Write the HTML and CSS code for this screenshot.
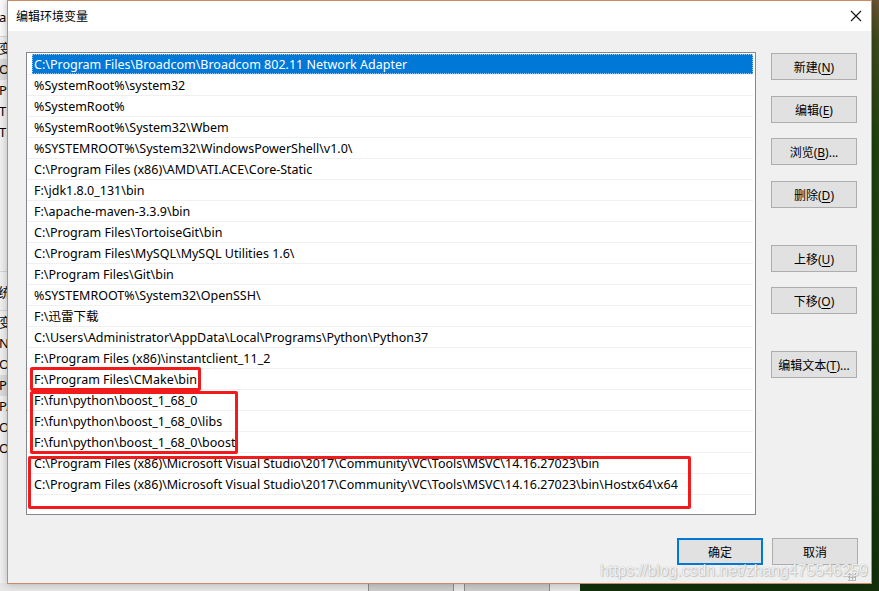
FILE: index.html
```html
<!DOCTYPE html>
<html lang="zh-CN">
<head>
    <meta charset="UTF-8">
    <title>编辑环境变量</title>
    <link rel="stylesheet" href="styles.css">
</head>
<body>
    <div class="desktop">
        <!-- window partly hidden behind the dialog -->
        <div class="behind">
            <div class="behind-top">ar</div>
            <div class="behind-list">
                <div class="frag">变</div>
                <div class="frag dark">O</div>
                <div class="frag">Pa</div>
                <div class="frag">TE</div>
                <div class="frag">TM</div>
            </div>
            <div class="behind-title">统</div>
            <div class="behind-list">
                <div class="frag">变</div>
                <div class="frag">N</div>
                <div class="frag">O</div>
                <div class="frag dark">Pa</div>
                <div class="frag">PA</div>
                <div class="frag">OP</div>
                <div class="frag">OP</div>
            </div>
            <div class="behind-footer">
                <span class="behind-btn"></span>
                <span class="behind-btn"></span>
            </div>
        </div>

        <div class="dialog">
            <div class="titlebar">
                <span class="title">编辑环境变量</span>
                <svg class="close" width="12" height="12" viewBox="0 0 12 12">
                    <path d="M1 1 L11 11 M11 1 L1 11" stroke="#111" stroke-width="1.1" fill="none"/>
                </svg>
            </div>

            <div class="dialog-body">
                <div class="main">
                    <div class="path-list">
                        <div class="row selected"><span class="cell">C:\Program Files\Broadcom\Broadcom 802.11 Network Adapter</span></div>
                        <div class="row"><span class="cell">%SystemRoot%\system32</span></div>
                        <div class="row"><span class="cell">%SystemRoot%</span></div>
                        <div class="row"><span class="cell">%SystemRoot%\System32\Wbem</span></div>
                        <div class="row"><span class="cell">%SYSTEMROOT%\System32\WindowsPowerShell\v1.0\</span></div>
                        <div class="row"><span class="cell">C:\Program Files (x86)\AMD\ATI.ACE\Core-Static</span></div>
                        <div class="row"><span class="cell">F:\jdk1.8.0_131\bin</span></div>
                        <div class="row"><span class="cell">F:\apache-maven-3.3.9\bin</span></div>
                        <div class="row"><span class="cell">C:\Program Files\TortoiseGit\bin</span></div>
                        <div class="row"><span class="cell">C:\Program Files\MySQL\MySQL Utilities 1.6\</span></div>
                        <div class="row"><span class="cell">F:\Program Files\Git\bin</span></div>
                        <div class="row"><span class="cell">%SYSTEMROOT%\System32\OpenSSH\</span></div>
                        <div class="row"><span class="cell">F:\迅雷下载</span></div>
                        <div class="row"><span class="cell">C:\Users\Administrator\AppData\Local\Programs\Python\Python37</span></div>
                        <div class="row"><span class="cell">F:\Program Files (x86)\instantclient_11_2</span></div>
                        <div class="row"><span class="cell">F:\Program Files\CMake\bin</span></div>
                        <div class="row"><span class="cell">F:\fun\python\boost_1_68_0</span></div>
                        <div class="row"><span class="cell">F:\fun\python\boost_1_68_0\libs</span></div>
                        <div class="row"><span class="cell">F:\fun\python\boost_1_68_0\boost</span></div>
                        <div class="row"><span class="cell">C:\Program Files (x86)\Microsoft Visual Studio\2017\Community\VC\Tools\MSVC\14.16.27023\bin</span></div>
                        <div class="row"><span class="cell">C:\Program Files (x86)\Microsoft Visual Studio\2017\Community\VC\Tools\MSVC\14.16.27023\bin\Hostx64\x64</span></div>
                        <div class="row empty"><span class="cell"></span></div>

                        <!-- red annotation boxes drawn over the list -->
                        <div class="mark mark-cmake"></div>
                        <div class="mark mark-boost"></div>
                        <div class="mark mark-msvc"></div>
                    </div>

                    <div class="side-buttons">
                        <button class="btn">新建(<u>N</u>)</button>
                        <button class="btn">编辑(<u>E</u>)</button>
                        <button class="btn">浏览(<u>B</u>)...</button>
                        <button class="btn">删除(<u>D</u>)</button>
                        <button class="btn gap-big">上移(<u>U</u>)</button>
                        <button class="btn">下移(<u>O</u>)</button>
                        <button class="btn gap-big">编辑文本(<u>T</u>)...</button>
                    </div>
                </div>

                <div class="footer-buttons">
                    <button class="btn default">确定</button>
                    <button class="btn">取消</button>
                </div>
            </div>

            <div class="grip"></div>
            <div class="watermark">https://blog.csdn.net/zhang475546259</div>
        </div>
    </div>
</body>
</html>
```

FILE: styles.css
```css
* {
    margin: 0;
    padding: 0;
    box-sizing: border-box;
}

body {
    width: 879px;
    height: 591px;
    overflow: hidden;
    font-family: 'Noto Sans', 'Noto Sans CJK SC', sans-serif;
    font-size: 12px;
    color: #000;
}

.desktop {
    position: relative;
    width: 879px;
    height: 591px;
    background: linear-gradient(180deg, #6a5434 0, #3d4a1c 40px, #21420f 140px, #1c3c10 400px, #12300a 591px);
}

/* window behind */
.behind {
    position: absolute;
    left: 0;
    top: 0;
    width: 580px;
    height: 591px;
    background-color: #f0f0f0;
    overflow: hidden;
}

.behind-top {
    height: 37px;
    padding-top: 8px;
    background-color: #fafafa;
    border-bottom: 1px solid #d5d5d5;
    font-size: 13px;
    margin-left: -1px;
}

.behind-list {
    padding-top: 1px;
}

.frag {
    height: 21px;
    line-height: 21px;
    font-size: 13px;
    margin-left: -1px;
}

.frag.dark {
    background-color: #dcdcdc;
}

.behind-title {
    margin-top: 128px;
    height: 40px;
    line-height: 40px;
    font-size: 13px;
    border-top: 1px solid #d5d5d5;
    border-bottom: 1px solid #d5d5d5;
    margin-left: -2px;
}

.behind-footer {
    position: absolute;
    left: 0;
    right: 0;
    bottom: 0;
    height: 8px;
    display: flex;
    gap: 10px;
    padding-left: 368px;
    background-color: #e6e6e6;
}

.behind-btn {
    width: 86px;
    height: 30px;
    background-color: #cccccc;
    border: 1px solid #8c8c8c;
}

/* dialog */
.dialog {
    position: absolute;
    left: 7px;
    top: 0;
    width: 865px;
    height: 584px;
    background-color: #f0f0f0;
    border: 1px solid #cd8a62;
    box-shadow: 0 0 8px rgba(0, 0, 0, 0.25);
    display: flex;
    flex-direction: column;
}

.titlebar {
    height: 30px;
    background-color: #ffffff;
    display: flex;
    align-items: center;
    justify-content: space-between;
    padding: 0 9px 0 8px;
}

.title {
    font-size: 12px;
    color: #000;
}

.dialog-body {
    flex: 1;
    padding: 21px 13px 0 18px;
    display: flex;
    flex-direction: column;
}

.main {
    display: flex;
    align-items: flex-start;
}

.path-list {
    position: relative;
    width: 730px;
    height: 463px;
    background-color: #ffffff;
    border: 1px solid #828790;
    padding: 1px 2px 0 0;
}

.row {
    height: 21px;
    border-bottom: 1px solid #f0f0f0;
    display: flex;
}

.cell {
    flex: 1;
    margin-left: 5px;
    padding: 1px 0 0 2px;
    font-size: 12.5px;
    line-height: 19px;
    white-space: nowrap;
}

.row.selected .cell {
    background-color: #0078d7;
    color: #ffffff;
    outline: 1px dotted #99c9ef;
    outline-offset: -1px;
}

.mark {
    position: absolute;
    border: 3px solid #f21b1b;
    border-radius: 2px;
}

.mark-cmake {
    left: 3px;
    top: 314px;
    width: 171px;
    height: 24px;
}

.mark-boost {
    left: 3px;
    top: 338px;
    width: 208px;
    height: 63px;
}

.mark-msvc {
    left: 1px;
    top: 403px;
    width: 663px;
    height: 53px;
}

.side-buttons {
    display: flex;
    flex-direction: column;
    margin-left: 15px;
    padding-top: 1px;
    gap: 15px;
}

.btn {
    width: 86px;
    height: 27px;
    background-color: #e1e1e1;
    border: 1px solid #adadad;
    font-family: 'Noto Sans', 'Noto Sans CJK SC', sans-serif;
    font-size: 12px;
    color: #000;
}

.btn u {
    text-decoration-thickness: 1px;
    text-underline-offset: 2px;
}

.side-buttons .btn:nth-child(2),
.side-buttons .btn:nth-child(4) {
    margin-top: 1px;
}

.gap-big {
    margin-top: 22px;
}

.footer-buttons {
    display: flex;
    justify-content: flex-end;
    gap: 9px;
    margin-top: 23px;
}

.btn.default {
    border: 2px solid #0078d7;
}

.grip {
    position: absolute;
    right: 15px;
    bottom: 2px;
    width: 8px;
    height: 8px;
    background-image: radial-gradient(circle, #b8b8b8 1px, transparent 1.2px);
    background-size: 3px 3px;
}

.watermark {
    position: absolute;
    left: 592px;
    top: 561px;
    font-family: 'Liberation Sans', Arial, sans-serif;
    font-size: 15.8px;
    line-height: 18px;
    color: rgba(255, 255, 255, 0.85);
    text-shadow: 0 0 1px rgba(120, 120, 120, 0.6), 1px 1px 1px rgba(140, 140, 140, 0.4);
    white-space: nowrap;
}
```
